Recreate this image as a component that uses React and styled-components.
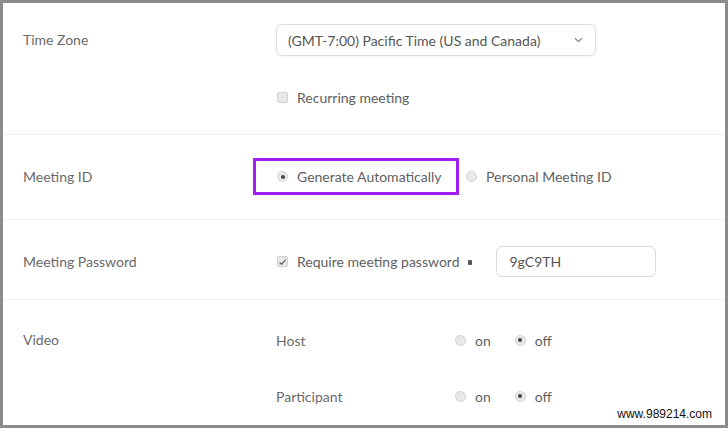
import React from "react";
import styled, { createGlobalStyle, css } from "styled-components";

const Global = createGlobalStyle`
  html, body { margin: 0; padding: 0; background: #fff; }
  body { font-family: Lato, "Open Sans", sans-serif; }
  * { box-sizing: border-box; }
`;

const Frame = styled.div`
  position: relative;
  width: 728px;
  height: 428px;
  border: 3px solid #8c8c8c;
  background: #fff;
  overflow: hidden;
  font-size: 14px;
  color: #6a6a6a;
`;

const Section = styled.div`
  display: grid;
  grid-template-columns: 253px 1fr;
  align-items: start;
  height: ${(p) => p.h}px;
  padding: ${(p) => p.pt}px 0 0 20px;
  border-bottom: ${(p) => (p.last ? "none" : "1px solid #efefef")};
`;

const Label = styled.div`
  height: ${(p) => p.lh || 32}px;
  line-height: ${(p) => p.lh || 32}px;
  color: #6a6a6a;
`;

const Stack = styled.div`
  display: flex;
  flex-direction: column;
  gap: ${(p) => p.gap || 0}px;
`;

const Select = styled.div`
  width: 320px;
  height: 32px;
  border: 1px solid #dcdcdc;
  border-radius: 6px;
  display: flex;
  align-items: center;
  justify-content: space-between;
  padding: 0 12px 0 11px;
  color: #555;
  box-shadow: 0 1px 2px rgba(0, 0, 0, 0.04);
`;

const Line = styled.div`
  display: flex;
  align-items: center;
  height: ${(p) => p.h || 20}px;
  color: #5f5f5f;
`;

const boxBase = css`
  width: 11px;
  height: 11px;
  flex: none;
  background: #e9e9e9;
  border: 1px solid #d2d2d2;
`;

const CheckBox = styled.span`
  ${boxBase};
  border-radius: 2px;
  margin: 0 ${(p) => p.mr || 9}px 0 1px;
  display: inline-flex;
  align-items: center;
  justify-content: center;
`;

const Radio = styled.span`
  ${boxBase};
  border-radius: 50%;
  margin-right: ${(p) => p.mr || 9}px;
  display: inline-flex;
  align-items: center;
  justify-content: center;
  &::after {
    content: "";
    width: 4px;
    height: 4px;
    border-radius: 50%;
    background: ${(p) => (p.checked ? "#444" : "transparent")};
  }
`;

const Highlight = styled.div`
  display: flex;
  align-items: center;
  height: 37px;
  width: 206px;
  margin-left: -23px;
  padding-left: 21px;
  border: 3px solid #a21ef0;
  color: #5f5f5f;
`;

const RadioGroup = styled.div`
  display: flex;
  align-items: center;
`;

const Option = styled.label`
  display: flex;
  align-items: center;
  margin-left: ${(p) => p.ml || 0}px;
  color: #5f5f5f;
`;

const Dot = styled.span`
  width: 4px;
  height: 5px;
  border-radius: 1px;
  background: #555;
  margin: 0 24px 0 9px;
  position: relative;
  top: 1px;
`;

const Input = styled.div`
  width: 160px;
  height: 31px;
  border: 1px solid #dcdcdc;
  border-radius: 6px;
  padding-left: 12px;
  display: flex;
  align-items: center;
  color: #555;
`;

const SubRow = styled.div`
  display: grid;
  grid-template-columns: 179px auto;
  align-items: center;
  height: 20px;
`;

const Watermark = styled.div`
  position: absolute;
  right: 13px;
  bottom: 4px;
  font-family: "Liberation Sans", Arial, sans-serif;
  font-size: 12px;
  color: #111;
  background: #fff;
`;

const Chevron = () => (
  <svg width="9" height="6" viewBox="0 0 9 6">
    <path d="M1 1.2 L4.5 4.6 L8 1.2" fill="none" stroke="#888" strokeWidth="1.2" />
  </svg>
);

const Check = () => (
  <svg width="9" height="8" viewBox="0 0 9 8">
    <path d="M1.5 4.2 L3.6 6.2 L7.6 1.6" fill="none" stroke="#666" strokeWidth="1.3" />
  </svg>
);

export default function App() {
  return (
    <Frame>
      <Global />
      <Section h={132} pt={21}>
        <Label>Time Zone</Label>
        <Stack gap={31}>
          <Select>
            <span>(GMT-7:00) Pacific Time (US and Canada)</span>
            <Chevron />
          </Select>
          <Line>
            <CheckBox />
            Recurring meeting
          </Line>
        </Stack>
      </Section>
      <Section h={85} pt={23}>
        <Label lh={37}>Meeting ID</Label>
        <RadioGroup>
          <Highlight>
            <Radio checked />
            Generate Automatically
          </Highlight>
          <Option ml={7}>
            <Radio mr={9} />
            Personal Meeting ID
          </Option>
        </RadioGroup>
      </Section>
      <Section h={80} pt={26}>
        <Label lh={31}>Meeting Password</Label>
        <RadioGroup>
          <Line h={31}>
            <CheckBox>
              <Check />
            </CheckBox>
            Require meeting password
          </Line>
          <Dot />
          <Input>9gC9TH</Input>
        </RadioGroup>
      </Section>
      <Section h={124} pt={30} last>
        <Label lh={20}>Video</Label>
        <Stack gap={36}>
          <SubRow>
            <span>Host</span>
            <RadioGroup>
              <Option>
                <Radio mr={9} />
                on
              </Option>
              <Option ml={24}>
                <Radio checked mr={9} />
                off
              </Option>
            </RadioGroup>
          </SubRow>
          <SubRow>
            <span>Participant</span>
            <RadioGroup>
              <Option>
                <Radio mr={9} />
                on
              </Option>
              <Option ml={24}>
                <Radio checked mr={9} />
                off
              </Option>
            </RadioGroup>
          </SubRow>
        </Stack>
      </Section>
      <Watermark>www.989214.com</Watermark>
    </Frame>
  );
}
